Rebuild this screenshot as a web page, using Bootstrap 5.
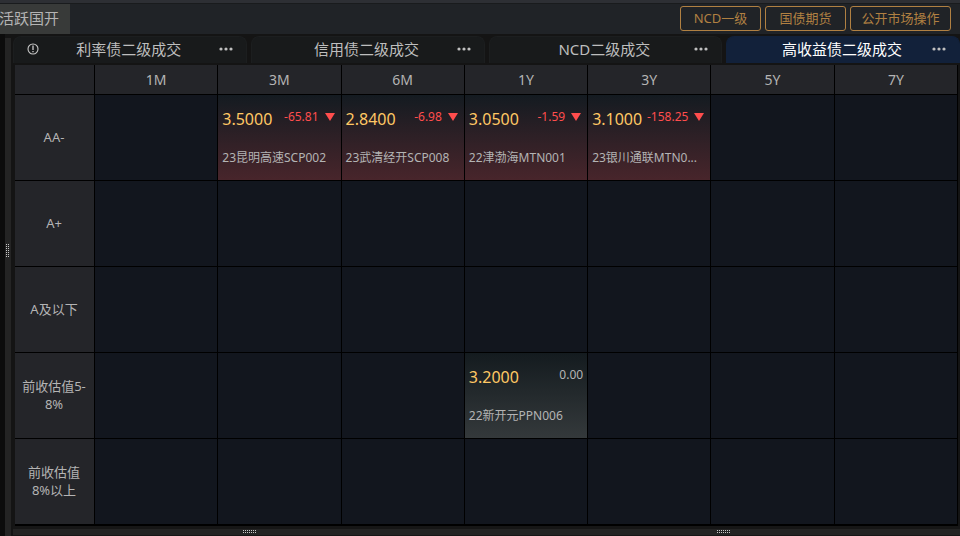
<!DOCTYPE html>
<html lang="zh-CN" data-bs-theme="dark">
<head>
<meta charset="utf-8">
<meta name="viewport" content="width=device-width, initial-scale=1">
<title>高收益债二级成交</title>
<link href="https://cdn.jsdelivr.net/npm/bootstrap@5.3.0/dist/css/bootstrap.min.css" rel="stylesheet">
<style>
body { background: #141414; color: #b4b4b4; font-family: "Noto Sans", "Noto Sans CJK SC", sans-serif; font-size: 13px; line-height: 18px; }
button { font: inherit; color: inherit; background: none; border: 0; padding: 0; }
.topbar { height: 34px; background: #202327; border-top: 3px solid #2d2f34; box-shadow: inset 0 1px #191b1d; padding-right: 9px; }
.page-tab { width: 70px; height: 30px; background: #383a39; font-size: 15px; text-align: left; white-space: nowrap; text-indent: -1px; padding-bottom: 2px; }
.btn-gold { --bs-btn-color: #b08042; --bs-btn-border-color: #b08042; --bs-btn-hover-color: #e0aa66; --bs-btn-hover-border-color: #e0aa66; --bs-btn-padding-y: 0; --bs-btn-padding-x: 9px; --bs-btn-font-size: 13px; --bs-btn-border-radius: 3px; --bs-btn-line-height: 23px; min-width: 81px; }
.btn-gold.wide { min-width: 101px; }
.side-edge { width: 5px; background: #0c0c0c; }
.splitter-v { width: 6px; background: #242424; margin-right: 2px; padding: 0 2px 74px 1px; }
.tabs { padding-top: 2px; gap: 4px; }
.market-tab { display: grid; grid-template-columns: 38px 1fr 40px; height: 27px; padding-bottom: 3px; align-items: center; justify-items: center; background: #181a1b; border: 1px solid #1c1e1f; border-bottom: 0; border-radius: 8px 8px 0 0; font-size: 15px; color: #bebebe; }
.market-tab.active { background: #12213a; border-color: #12213a; color: #fff; }
.market-tab svg { display: block; fill: #c0c0c0; }
.table-area { padding: 2px 2px 0; }
.quotes { table-layout: fixed; width: 100%; border-collapse: separate; border-spacing: 0; border-bottom: 1px solid #000; }
.quotes th, .quotes td { border-right: 1px solid #000; border-bottom: 1px solid #000; padding: 0; }
.quotes th { background: #242529; font-weight: 400; text-align: center; vertical-align: middle; }
.quotes thead th { height: 30px; font-size: 14px; }
.quotes tbody th { padding: 0 6px 2px 5px; }
.quotes tbody td { height: 86px; background: #12161e; vertical-align: top; }
.quotes .label-col { width: 80px; }
.quotes td.fall { background: linear-gradient(#141b21, #48252b); }
.quotes td.flat { background: linear-gradient(#141b1f, #34393b); }
.quote-top { padding: 13px 4px 0; height: 54px; }
.price { font-size: 16px; line-height: 22px; color: #ffc864; }
.change { font-size: 12px; line-height: 18px; gap: 6px; }
.fall .change { color: #ff4d4d; }
.fall .change::after { content: ""; border: 5px solid transparent; border-top: 8px solid #ff4d4d; border-bottom: 0; margin-right: 2px; }
.bond { font-size: 12px; line-height: 18px; padding: 0 4px; }
.splitters { height: 10px; padding-top: 3px; background: #161616; }
.splitter-h { height: 6px; padding-bottom: 1px; background: #232323; }
.grip-v { width: 3px; height: 13px; background: conic-gradient(#c8c8c8 25%, #242424 0) 1px 0 / 2px 2px; }
.grip-h { width: 13px; height: 3px; background: conic-gradient(#c8c8c8 25%, #232323 0) 1px 0 / 2px 2px; }
</style>
<script src="https://cdn.jsdelivr.net/npm/bootstrap@5.3.0/dist/js/bootstrap.bundle.min.js"></script>
</head>
<body class="min-vh-100 d-flex flex-column overflow-hidden">
<header class="topbar d-flex align-items-center justify-content-between">
  <button class="page-tab" type="button">活跃国开</button>
  <div class="d-flex gap-1">
    <button class="btn btn-gold" type="button">NCD一级</button>
    <button class="btn btn-gold" type="button">国债期货</button>
    <button class="btn btn-gold wide" type="button">公开市场操作</button>
  </div>
</header>
<div class="d-flex flex-grow-1">
  <div class="side-edge flex-shrink-0"></div>
  <div class="splitter-v flex-shrink-0 d-flex align-items-center justify-content-center mt-1"><div class="grip-v"></div></div>
  <main class="flex-grow-1 overflow-hidden">
    <nav class="tabs d-flex" aria-label="二级成交">
      <div class="market-tab flex-fill w-25">
        <button type="button" aria-label="提示"><svg width="12" height="12" viewBox="0 0 12 12"><circle cx="6" cy="6" r="5" fill="none" stroke="#c8c8c8" stroke-width="1.1"/><path d="M5.3 2.5h1.4v4.4H5.3zM5.3 7.9h1.4v1.4H5.3z"/></svg></button>
        <button type="button">利率债二级成交</button>
        <button type="button" aria-label="更多"><svg width="14" height="4" viewBox="0 0 14 4"><circle cx="2" cy="2" r="1.6"/><circle cx="7" cy="2" r="1.6"/><circle cx="12" cy="2" r="1.6"/></svg></button>
      </div>
      <div class="market-tab flex-fill w-25">
        <span></span>
        <button type="button">信用债二级成交</button>
        <button type="button" aria-label="更多"><svg width="14" height="4" viewBox="0 0 14 4"><circle cx="2" cy="2" r="1.6"/><circle cx="7" cy="2" r="1.6"/><circle cx="12" cy="2" r="1.6"/></svg></button>
      </div>
      <div class="market-tab flex-fill w-25">
        <span></span>
        <button type="button">NCD二级成交</button>
        <button type="button" aria-label="更多"><svg width="14" height="4" viewBox="0 0 14 4"><circle cx="2" cy="2" r="1.6"/><circle cx="7" cy="2" r="1.6"/><circle cx="12" cy="2" r="1.6"/></svg></button>
      </div>
      <div class="market-tab active flex-fill w-25">
        <span></span>
        <button type="button" aria-current="page">高收益债二级成交</button>
        <button type="button" aria-label="更多"><svg width="14" height="4" viewBox="0 0 14 4"><circle cx="2" cy="2" r="1.6"/><circle cx="7" cy="2" r="1.6"/><circle cx="12" cy="2" r="1.6"/></svg></button>
      </div>
    </nav>
    <div class="table-area">
      <table class="quotes">
        <thead>
          <tr><th class="label-col"></th><th scope="col">1M</th><th scope="col">3M</th><th scope="col">6M</th><th scope="col">1Y</th><th scope="col">3Y</th><th scope="col">5Y</th><th scope="col">7Y</th></tr>
        </thead>
        <tbody>
          <tr>
            <th scope="row">AA-</th>
            <td></td>
            <td class="fall"><div class="quote-top d-flex justify-content-between"><span class="price">3.5000</span><span class="change d-flex align-items-center align-self-start">-65.81</span></div><div class="bond text-truncate">23昆明高速SCP002</div></td>
            <td class="fall"><div class="quote-top d-flex justify-content-between"><span class="price">2.8400</span><span class="change d-flex align-items-center align-self-start">-6.98</span></div><div class="bond text-truncate">23武清经开SCP008</div></td>
            <td class="fall"><div class="quote-top d-flex justify-content-between"><span class="price">3.0500</span><span class="change d-flex align-items-center align-self-start">-1.59</span></div><div class="bond text-truncate">22津渤海MTN001</div></td>
            <td class="fall"><div class="quote-top d-flex justify-content-between"><span class="price">3.1000</span><span class="change d-flex align-items-center align-self-start">-158.25</span></div><div class="bond text-truncate">23银川通联MTN0...</div></td>
            <td></td><td></td>
          </tr>
          <tr><th scope="row">A+</th><td></td><td></td><td></td><td></td><td></td><td></td><td></td></tr>
          <tr><th scope="row">A及以下</th><td></td><td></td><td></td><td></td><td></td><td></td><td></td></tr>
          <tr>
            <th scope="row">前收估值5-<br>8%</th>
            <td></td><td></td><td></td>
            <td class="flat"><div class="quote-top d-flex justify-content-between"><span class="price">3.2000</span><span class="change d-flex align-items-center align-self-start">0.00</span></div><div class="bond text-truncate">22新开元PPN006</div></td>
            <td></td><td></td><td></td>
          </tr>
          <tr><th scope="row">前收估值<br>8%以上</th><td></td><td></td><td></td><td></td><td></td><td></td><td></td></tr>
        </tbody>
      </table>
    </div>
    <div class="splitters d-flex">
      <div class="splitter-h flex-fill d-flex align-items-center justify-content-center"><div class="grip-h"></div></div>
      <div class="splitter-h flex-fill d-flex align-items-center justify-content-center"><div class="grip-h"></div></div>
    </div>
  </main>
</div>
</body>
</html>
